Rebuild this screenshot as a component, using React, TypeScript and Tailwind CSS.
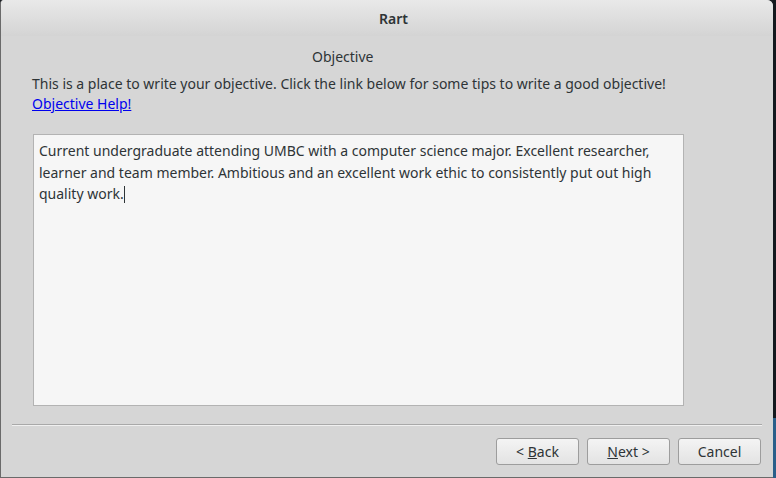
import React from "react";

export default function App() {
  const font = { fontFamily: '"Noto Sans", "DejaVu Sans", sans-serif' };
  return (
    <div className="w-[776px] h-[478px] flex bg-[#1b1f24] overflow-hidden" style={font}>
      <div className="w-[773px] h-[478px] flex flex-col bg-[#d6d6d6] border-l border-b border-[#6a6a6a] rounded-tl-[4px] rounded-tr-[6px] overflow-hidden">
        <div className="h-[36px] shrink-0 flex items-center justify-center bg-gradient-to-b from-[#e9e9e9] to-[#d4d4d4] text-[14px] font-semibold text-[#2e3436] pl-[13px] pt-[0px]">
          Rart
        </div>
        <div className="flex flex-col flex-1">
          <div className="h-[38px] flex items-center pl-[311px] text-[14px] text-[#2e3436] pt-[2px]">
            Objective
          </div>
          <div className="pl-[31px] text-[14px] leading-[20px] text-[#2e3436]">
            <div>This is a place to write your objective. Click the link below for some tips to write a good objective!</div>
            <div>
              <span className="text-[#0000ee] underline">Objective Help!</span>
            </div>
          </div>
          <div className="ml-[32px] mt-[20px] w-[651px] h-[272px] bg-[#f6f6f6] border border-[#b3b3b3] px-[5px] pt-[5px] text-[14px] leading-[21.5px] text-[#2e3436]">
            Current undergraduate attending UMBC with a computer science major. Excellent researcher, learner and team member. Ambitious and an excellent work ethic to consistently put out high quality work.
            <span className="inline-block w-[1px] h-[17px] bg-[#2e3436] align-middle -mt-[2px]"></span>
          </div>
          <div className="ml-[11px] mr-[11px] mt-[18px] h-[2px] border-t border-[#a9a9a9] border-b border-b-[#f0f0f0]"></div>
          <div className="flex justify-end gap-[8px] mt-[12px] pr-[12px]">
            <button className="w-[83px] h-[27px] rounded-[3px] border border-[#9d9d9d] bg-gradient-to-b from-[#f4f4f4] to-[#e3e3e3] text-[14px] text-[#2e3436]">
              &lt; <span className="underline">B</span>ack
            </button>
            <button className="w-[83px] h-[27px] rounded-[3px] border border-[#9d9d9d] bg-gradient-to-b from-[#f4f4f4] to-[#e3e3e3] text-[14px] text-[#2e3436]">
              <span className="underline">N</span>ext &gt;
            </button>
            <button className="w-[83px] h-[27px] rounded-[3px] border border-[#9d9d9d] bg-gradient-to-b from-[#f4f4f4] to-[#e3e3e3] text-[14px] text-[#2e3436]">
              Cancel
            </button>
          </div>
        </div>
      </div>
      <div className="w-[3px] flex flex-col">
        <div className="flex-1 bg-[#14191e]"></div>
        <div className="h-[60px] bg-[#2a5f8a]"></div>
      </div>
    </div>
  );
}
